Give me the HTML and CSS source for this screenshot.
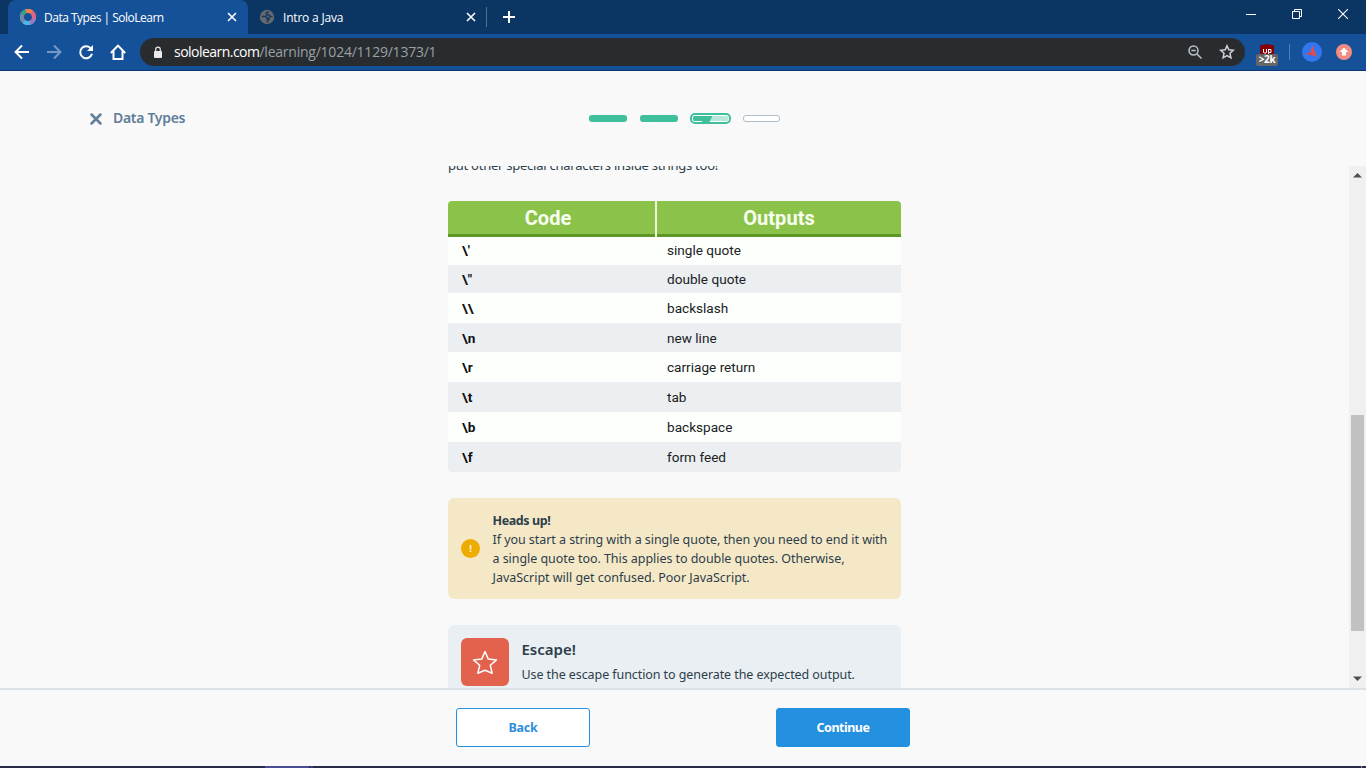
FILE: index.html
```html
<!DOCTYPE html>
<html lang="en">
<head>
<meta charset="utf-8">
<title>Data Types | SoloLearn</title>
<link rel="stylesheet" href="styles.css">
</head>
<body>
<div class="browser">
  <div class="tabstrip">
    <div class="tab tab-active">
      <svg class="favicon" width="16" height="16" viewBox="0 0 16 16" fill="none" stroke-width="4.200">
        <path d="M2.1 6A6.1 6.1 0 0 1 7 2" stroke="#3e9f83"/>
        <path d="M6 2.2A6.1 6.1 0 0 1 12 3.4" stroke="#f0814c"/>
        <path d="M11.4 3A6.1 6.1 0 0 1 13.7 10" stroke="#dc6482"/>
        <path d="M14 9.4A6.1 6.1 0 0 1 9 14" stroke="#9b7ac0"/>
        <path d="M10 13.8A6.1 6.1 0 0 1 3.4 12" stroke="#4db6e8"/>
        <path d="M4 12.6A6.1 6.1 0 0 1 2.2 5.5" stroke="#7389a9"/>
      </svg>
      <span class="tab-title title-one">Data Types | SoloLearn</span>
      <svg class="tab-close" width="10" height="10" viewBox="0 0 10 10" stroke="#fff" stroke-width="1.6"><path d="M1 1l8 8M9 1l-8 8"/></svg>
    </div>
    <div class="tab">
      <svg class="favicon" width="16" height="16" viewBox="0 0 16 16"><circle cx="8" cy="8" r="7.200" fill="#66686d"/><path d="M2.500 7.500h4l1.500 1.500h2v1.500H8.500v3M9.500 2.500L7.500 4v2H10l1 1.500h2.500" fill="none" stroke="#153a63" stroke-width="1.700"/></svg>
      <span class="tab-title title-two">Intro a Java</span>
      <svg class="tab-close" width="10" height="10" viewBox="0 0 10 10" stroke="#fff" stroke-width="1.6"><path d="M1 1l8 8M9 1l-8 8"/></svg>
    </div>
    <span class="tab-divider"></span>
    <svg class="new-tab" width="12" height="12" viewBox="0 0 12 12" stroke="#fff" stroke-width="2"><path d="M6 0v12M0 6h12"/></svg>
    <div class="window-controls">
      <svg width="10" height="10" viewBox="0 0 10 10" stroke="#fff"><path d="M0 5.500h10"/></svg>
      <svg width="10" height="10" viewBox="0 0 10 10" fill="none" stroke="#fff"><path d="M.5 2.500h7v7h-7zM2.500 2.500v-2h7v7h-2"/></svg>
      <svg width="10" height="10" viewBox="0 0 10 10" stroke="#fff" stroke-width="1.100"><path d="M0 0l10 10M10 0L0 10"/></svg>
    </div>
  </div>

  <div class="toolbar">
    <svg class="nav-icon" width="16" height="16" viewBox="0 0 16 16" fill="none" stroke="#fff" stroke-width="2"><path d="M15 8H2M8 1.500L1.600 8 8 14.500"/></svg>
    <svg class="nav-icon" width="16" height="16" viewBox="0 0 16 16" fill="none" stroke="#7498c8" stroke-width="2"><path d="M1 8h13M8 1.500L14.400 8 8 14.500"/></svg>
    <svg class="nav-icon" width="16" height="16" viewBox="0 0 16 16"><path d="M13 4.600A6 6 0 1 0 14 9.800" fill="none" stroke="#fff" stroke-width="2"/><path d="M15 1v6H9z" fill="#fff"/></svg>
    <svg class="nav-icon" width="16" height="16" viewBox="0 0 16 16" fill="none" stroke="#fff" stroke-width="2"><path d="M.8 9L8 1.600 15.200 9M3.500 7v8h9V7"/></svg>
    <div class="omnibox">
      <svg width="10" height="13" viewBox="0 0 10 13"><rect x="1" y="5" width="8" height="7" rx="1" fill="#e8eaed"/><path d="M2.700 5V3.400a2.300 2.300 0 0 1 4.600 0V5" fill="none" stroke="#e8eaed" stroke-width="1.200"/></svg>
      <span class="url"><span class="host">sololearn.com</span><span class="path">/learning/1024/1129/1373/1</span></span>
      <svg class="search-icon" width="14" height="14" viewBox="0 0 14 14" fill="none" stroke="#bdc1c6" stroke-width="1.500"><circle cx="5.500" cy="5.500" r="4.500"/><path d="M9 9l4.500 4.500M3.300 5.500h4.400"/></svg>
      <svg width="16" height="16" viewBox="0 0 16 16" fill="none" stroke="#d0d3d7" stroke-width="1.500"><path d="M8 1.800l1.800 4 4.500.5-3.300 3 .9 4.500L8 11.500l-3.900 2.300.9-4.500-3.300-3 4.500-.5z"/></svg>
    </div>
    <div class="blocker">
      <svg width="14" height="10" viewBox="0 0 14 10"><path d="M0 1h3l4-1 4 1h3v9H0z" fill="#850009"/><path d="M3.500 5v3.500q1.500 1.500 3 0V5M8.500 5v5M8.500 5.500H11v3H8.500" fill="none" stroke="#fff"/></svg>
      <span class="blocker-count">&gt;2k</span>
    </div>
    <span class="toolbar-divider"></span>
    <svg class="ext-bird" width="20" height="20" viewBox="0 0 20 20"><circle cx="10" cy="10" r="10" fill="#3176ef"/><path d="M10.500 3L9 9.500l-5.500 3L10 13z" fill="#f1796c"/><path d="M10.500 3l4.500 12-5-2-1-3.500z" fill="#d84f55"/><path d="M3.500 12.500L9 9.500l2 4z" fill="#c64655"/></svg>
    <svg class="ext-up" width="16" height="16" viewBox="0 0 16 16"><circle cx="8" cy="8" r="8" fill="#f28b82"/><path d="M8 3.500L12.500 8H10v3.500H6V8H3.500z" fill="#fff"/></svg>
  </div>
</div>

<header class="lesson-header">
  <div class="lesson-name">
    <svg width="14" height="14" viewBox="0 0 14 14" stroke="#607d99" stroke-width="2.500" stroke-linecap="round"><path d="M2.500 2.500l9 9M11.500 2.500l-9 9"/></svg>
    <span>Data Types</span>
  </div>
  <div class="progress">
    <span class="step done"></span>
    <span class="step done"></span>
    <svg class="step-current" width="41" height="11" viewBox="0 0 41 11"><rect x="1" y="1" width="39" height="9" rx="4" fill="#fff" stroke="#3fbf9c" stroke-width="2"/><rect x="2.500" y="3" width="36" height="5" rx="2" fill="#b9e7da"/><path d="M4 3h18.500l-3 6H12V8H4q-2-2.500 0-5z" fill="#3fbf9c"/></svg>
    <span class="step todo"></span>
  </div>
</header>

<div class="scroller">
  <main class="content">
    <p class="intro">put other special characters inside strings too!</p>
    <div class="codes">
      <div class="codes-row codes-head"><span>Code</span><span>Outputs</span></div>
      <div class="codes-row codes-first"><b>\'</b><span>single quote</span></div>
      <div class="codes-row"><b>\"</b><span>double quote</span></div>
      <div class="codes-row"><b>\\</b><span>backslash</span></div>
      <div class="codes-row"><b>\n</b><span>new line</span></div>
      <div class="codes-row"><b>\r</b><span>carriage return</span></div>
      <div class="codes-row"><b>\t</b><span>tab</span></div>
      <div class="codes-row"><b>\b</b><span>backspace</span></div>
      <div class="codes-row"><b>\f</b><span>form feed</span></div>
    </div>
    <section class="notice">
      <svg width="19" height="19" viewBox="0 0 19 19"><circle cx="9.500" cy="9.500" r="9.500" fill="#eeab00"/><path d="M9.500 6v4.500M9.500 11.500v1.500" stroke="#fff3d2" stroke-width="1.700"/></svg>
      <div class="notice-text">
        <b>Heads up!</b>
        <span class="line-a">If you start a string with a single quote, then you need to end it with</span>
        <span class="line-b">a single quote too. This applies to double quotes. Otherwise,</span>
        <span class="line-c">JavaScript will get confused. Poor JavaScript.</span>
      </div>
    </section>
    <section class="challenge">
      <div class="challenge-icon"><svg width="26" height="25" viewBox="0 0 26 25" fill="none" stroke="#fff" stroke-width="1.500" stroke-linejoin="round"><path d="M13 1.500l3.300 7.600 8.200.8-6.200 5.400 1.900 8L13 20.300l-7.200 3 1.900-8-6.200-5.400 8.200-.8z"/></svg></div>
      <div class="challenge-text">
        <h2>Escape!</h2>
        <p>Use the escape function to generate the expected output.</p>
      </div>
    </section>
  </main>
  <div class="scrollbar">
    <svg width="9" height="5" viewBox="0 0 9 5"><path d="M4.500 0L9 4.500H0z" fill="#505050"/></svg>
    <span class="thumb"></span>
    <svg width="9" height="5" viewBox="0 0 9 5"><path d="M0 .5h9L4.500 5z" fill="#505050"/></svg>
  </div>
</div>

<footer class="lesson-footer">
  <button class="btn btn-back">Back</button>
  <button class="btn btn-next">Continue</button>
</footer>
<div class="taskbar"><span class="task-active"></span><span class="task-edge"></span><span class="task-desktop"></span></div>
</body>
</html>
```

FILE: styles.css
```css
* { box-sizing: border-box; }
body {
  margin: 0;
  width: 1366px;
  height: 768px;
  overflow: hidden;
  display: flex;
  flex-direction: column;
  background: #f9f9f9;
  color: #2d3e4a;
  font-family: "Noto Sans", sans-serif;
}
svg { display: block; flex: none; }

.browser { height: 71px; flex: none; background: #155198; border-bottom: 1px solid #0c376d; font-family: "Open Sans", sans-serif; }
.tabstrip { height: 34px; display: flex; align-items: center; background: #0b3663; padding-left: 8px; }
.tab { height: 34px; width: 240px; display: flex; align-items: center; padding: 0 11px 0 12px; color: #fff; font-size: 12px; }
.tab-active { background: #155198; border-radius: 8px 8px 0 0; }
.tab-title { margin-left: 8px; flex: 1; white-space: nowrap; }
.title-one { letter-spacing: -0.5px; }
.title-two { letter-spacing: -0.2px; }
.tab + .tab { padding-left: 11px; width: 238px; padding-right: 10px; }
.tab-divider { width: 1px; height: 20px; background: #55718f; }
.new-tab { margin-left: 16px; }
.window-controls { margin-left: auto; display: flex; gap: 36px; padding-right: 18px; margin-bottom: 6px; }

.toolbar { height: 36px; display: flex; align-items: center; padding-left: 14px; }
.nav-icon { margin-right: 16px; }
.omnibox { width: 1105px; height: 28px; margin-left: -2px; border-radius: 14px; background: #292c2f; display: flex; align-items: center; padding: 0 10px 0 13px; }
.url { margin-left: 11px; flex: 1; font-size: 14px; line-height: 20px; }
.host { color: #fff; letter-spacing: -0.53px; }
.path { color: #99a0a7; letter-spacing: -0.23px; }
.search-icon { margin-right: 17px; }
.blocker { margin-left: 11px; width: 22px; display: flex; flex-direction: column; align-items: center; padding-top: 5px; }
.blocker-count { width: 22px; height: 12px; background: #666; border-radius: 2px; color: #fff; font: bold 10px/11px "Open Sans", sans-serif; text-align: center; letter-spacing: -0.3px; }
.toolbar-divider { width: 1px; height: 16px; background: #4f80b9; margin-left: 11px; }
.ext-bird { margin-left: 12px; }
.ext-up { margin-left: 14px; }

.lesson-header { height: 95px; flex: none; display: grid; grid-template-columns: 500px 1fr; align-items: center; padding-left: 89px; }
.lesson-name { display: flex; align-items: center; gap: 10px; color: #607d99; font-size: 14px; font-weight: 600; letter-spacing: -0.3px; line-height: 20px; }
.lesson-name span { padding-bottom: 2px; }
.progress { display: flex; align-items: center; }
.step { height: 7px; border-radius: 3px; }
.done { width: 38px; background: #3fbf9c; margin-right: 13px; }
.step-current { margin-left: -1px; margin-right: 12px; }
.todo { width: 37px; border: 1px solid #b0bec9; background: #fff; }

.scroller { height: 522px; flex: none; display: flex; overflow: hidden; }
.content { flex: 1; padding: 0 448px; }
.intro { margin: -12px 0 0; height: 47px; font-size: 13px; line-height: 22px; white-space: nowrap; letter-spacing: -0.25px; }
.codes { display: grid; grid-template-rows: 36px 28px 28px 30px 29px 30px 30px 30px 30px; width: 453px; border-radius: 4px; overflow: hidden; font: 13.6px/16px Roboto, sans-serif; color: #202124; }
.codes-row { display: grid; grid-template-columns: 207px 246px; align-items: center; background: #fcfffb; }
.codes-row:nth-child(odd) { background: #ebeff1; }
.codes-row b { padding-left: 14px; color: #111; }
.codes-row span { padding-left: 12px; }
.codes .codes-first { padding-bottom: 2px; }
.codes .codes-head { background: #8bc34a; border-bottom: 3px solid #5e9726; color: #f8fff0; font-size: 20px; font-weight: 700; text-align: center; align-items: start; letter-spacing: 0.05px; }
.codes-head span { padding: 0; line-height: 34px; }
.codes-head span:first-child { padding-right: 7px; }
.codes-head span + span { height: 36px; border-left: 2px solid #edf6df; }

.notice { margin-top: 26px; width: 453px; height: 101px; border-radius: 6px; background: #f5e8c7; display: flex; align-items: center; padding-left: 13px; gap: 12.5px; }
.notice-text { display: flex; flex-direction: column; font-size: 12.5px; line-height: 19px; white-space: nowrap; }
.notice-text b { letter-spacing: -0.4px; }
.line-a, .line-b { letter-spacing: -0.05px; }
.line-c { letter-spacing: -0.02px; }
.challenge { margin-top: 26px; width: 453px; height: 90px; border-radius: 6px; background: #eaeff3; display: flex; padding: 13px; gap: 12.5px; }
.challenge-icon { width: 48px; height: 48px; border-radius: 6px; background: #e3624d; display: flex; align-items: center; justify-content: center; }
.challenge h2 { margin: 0; font-size: 15px; font-weight: 600; line-height: 22px; }
.challenge p { margin: 5px 0 0; font-size: 12.5px; line-height: 20px; white-space: nowrap; letter-spacing: -0.08px; }

.scrollbar { width: 17px; background: #f0f0f0; display: flex; flex-direction: column; align-items: center; padding: 7px 0; }
.thumb { width: 13px; height: 216px; margin: 237px 0 auto; background: #c1c1c1; }

.lesson-footer { height: 78px; flex: none; border-top: 2px solid #dde2e6; display: flex; justify-content: center; gap: 186px; padding-top: 18px; }
.btn { width: 134px; height: 39px; border: 1px solid #2491e0; border-radius: 3px; font: bold 12.5px/18px "Noto Sans", sans-serif; padding: 0; }
.btn-back { background: #fff; color: #2e8fe0; letter-spacing: -0.3px; }
.btn-next { background: #2491e0; color: #fff; letter-spacing: -0.5px; }
.taskbar { height: 2px; flex: none; background: #292b4b; display: flex; padding-left: 265px; }
.task-active { width: 44px; background: #494d94; }
.task-edge { width: 3px; margin-left: 1px; background: #3c407a; }
.task-desktop { width: 1px; margin-left: auto; margin-right: 4px; background: #85879b; }
```
